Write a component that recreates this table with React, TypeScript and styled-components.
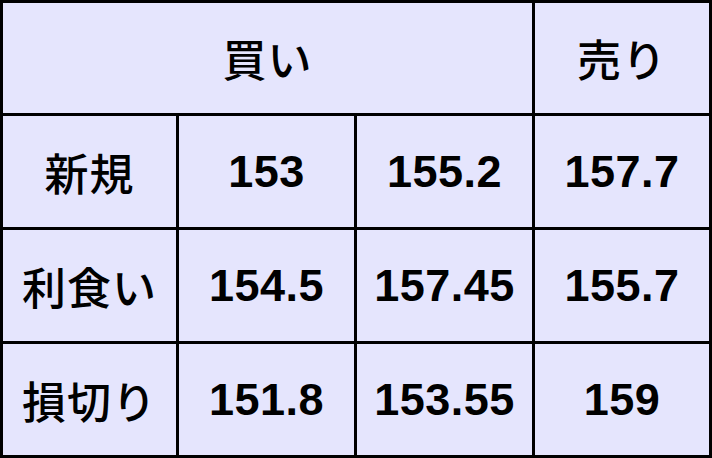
import React from "react";
import styled, { createGlobalStyle } from "styled-components";

const GlobalStyle = createGlobalStyle`
  html, body {
    margin: 0;
    padding: 0;
    background: #ffffff;
  }
`;

const Table = styled.div`
  display: grid;
  grid-template-columns: 173px 175px 175px 174px;
  grid-template-rows: 110px 111px 111px 111px;
  gap: 3px;
  padding: 3px;
  width: 712px;
  height: 458px;
  box-sizing: border-box;
  background: #000000;
`;

const Cell = styled.div<{ $span?: number; $jp?: boolean }>`
  grid-column: span ${(p) => p.$span || 1};
  display: flex;
  align-items: center;
  justify-content: center;
  background: #e5e5fd;
  color: #000000;
  font-family: ${(p) =>
    p.$jp
      ? '"Noto Sans CJK JP", sans-serif'
      : '"Liberation Sans", Arial, sans-serif'};
  font-weight: ${(p) => (p.$jp ? 500 : 700)};
  font-size: ${(p) => (p.$jp ? "44px" : "45px")};
  letter-spacing: ${(p) => (p.$jp ? "1px" : "0.5px")};
`;

const rows = [
  { label: "新規", values: ["153", "155.2", "157.7"] },
  { label: "利食い", values: ["154.5", "157.45", "155.7"] },
  { label: "損切り", values: ["151.8", "153.55", "159"] },
];

const App: React.FC = () => {
  return (
    <>
      <GlobalStyle />
      <Table>
        <Cell $span={3} $jp>
          買い
        </Cell>
        <Cell $jp>売り</Cell>
        {rows.map((row) => (
          <React.Fragment key={row.label}>
            <Cell $jp>{row.label}</Cell>
            {row.values.map((v, i) => (
              <Cell key={i}>{v}</Cell>
            ))}
          </React.Fragment>
        ))}
      </Table>
    </>
  );
};

export default App;
